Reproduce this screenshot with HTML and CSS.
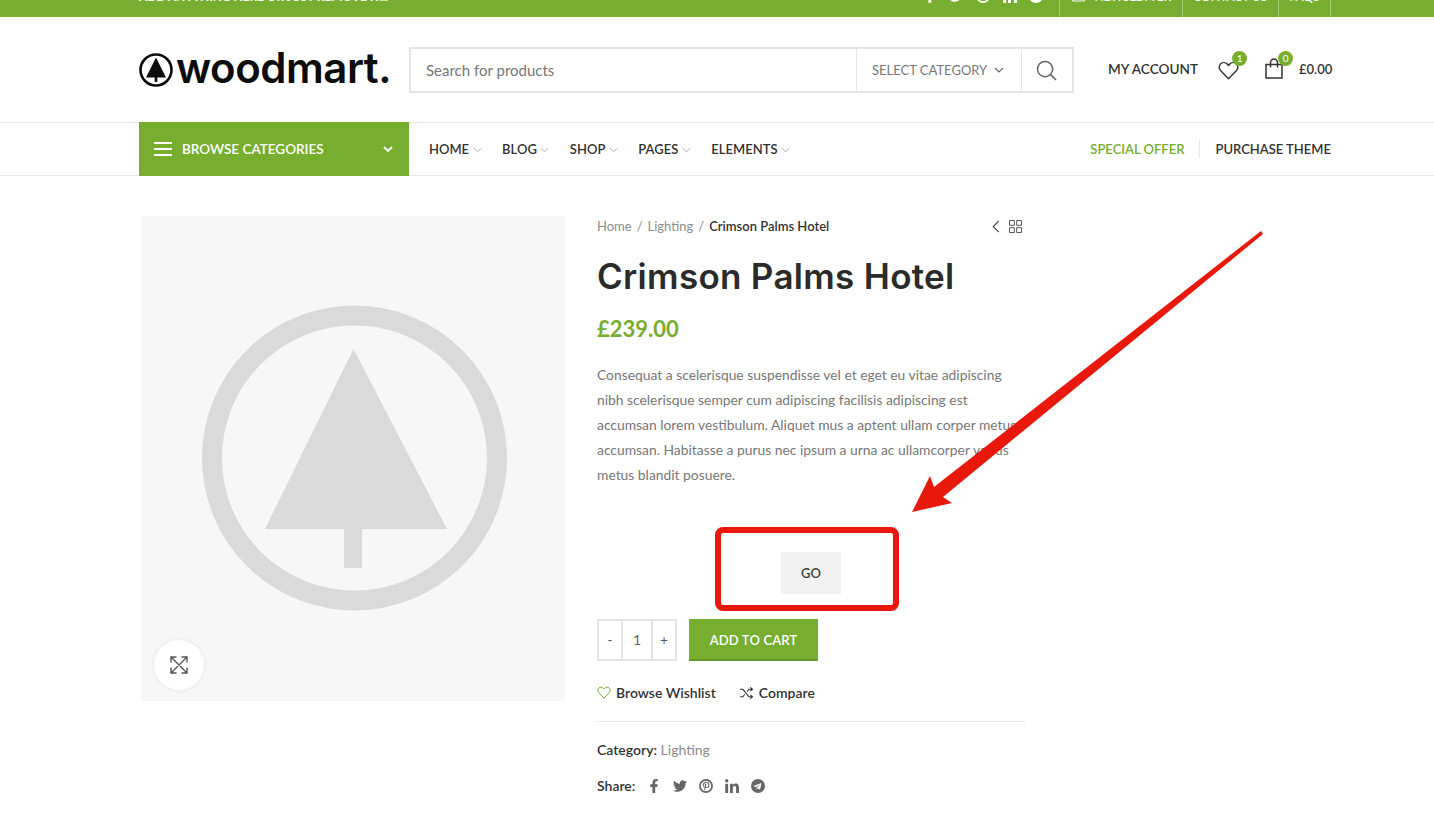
FILE: index.html
```html
<!DOCTYPE html>
<html lang="en">
<head>
    <meta charset="UTF-8">
    <meta name="viewport" content="width=device-width, initial-scale=1.0">
    <title>Crimson Palms Hotel - Woodmart</title>
    <link rel="stylesheet" href="styles.css">
</head>
<body>
    <!-- Shared icons -->
    <svg class="icon-defs" aria-hidden="true">
        <symbol id="i-facebook" viewBox="0 0 320 512"><path d="M279.14 288l14.22-92.66h-88.91v-60.13c0-25.35 12.42-50.06 52.24-50.06h40.42V6.26S260.43 0 225.36 0c-73.22 0-121.08 44.38-121.08 124.72v70.62H22.89V288h81.39v224h100.17V288z"/></symbol>
        <symbol id="i-twitter" viewBox="0 0 512 512"><path d="M459.37 151.716c.325 4.548.325 9.097.325 13.645 0 138.72-105.583 298.558-298.558 298.558-59.452 0-114.68-17.219-161.137-47.106 8.447.974 16.568 1.299 25.34 1.299 49.055 0 94.213-16.568 130.274-44.832-46.132-.975-84.792-31.188-98.112-72.772 6.498.974 12.995 1.624 19.818 1.624 9.421 0 18.843-1.3 27.614-3.573-48.081-9.747-84.143-51.98-84.143-102.985v-1.299c13.969 7.797 30.214 12.67 47.431 13.319-28.264-18.843-46.781-51.005-46.781-87.391 0-19.492 5.197-37.36 14.294-52.954 51.655 63.675 129.3 105.258 216.365 109.807-1.624-7.797-2.599-15.918-2.599-24.04 0-57.828 46.782-104.934 104.934-104.934 30.213 0 57.502 12.67 76.67 33.137 23.715-4.548 46.456-13.32 66.599-25.34-7.798 24.366-24.366 44.833-46.132 57.827 21.117-2.273 41.584-8.122 60.426-16.243-14.292 20.791-32.161 39.308-52.628 54.253z"/></symbol>
        <symbol id="i-pinterest" viewBox="0 0 24 24"><circle cx="12" cy="12" r="10.4" fill="none" stroke="currentColor" stroke-width="3"/><g transform="translate(6.500 4.600) scale(.03)"><path d="M204 6.500C101.400 6.500 0 74.900 0 185.600 0 256 39.600 296 63.600 296c9.900 0 15.600-27.600 15.600-35.400 0-9.300-23.700-29.100-23.700-67.800 0-80.400 61.200-137.400 140.400-137.400 68.100 0 118.500 38.700 118.500 109.800 0 53.100-21.300 152.700-90.300 152.700-24.900 0-46.200-18-46.200-43.800 0-37.800 26.400-74.400 26.400-113.400 0-66.200-93.900-54.200-93.900 25.800 0 16.800 2.100 35.400 9.600 50.700-13.800 59.400-42 147.900-42 209.100 0 18.900 2.700 37.500 4.500 56.400 3.400 3.800 1.700 3.400 6.900 1.500 50.400-69 48.600-82.500 71.400-172.800 12.300 23.400 44.100 36 69.300 36 106.200 0 153.900-103.500 153.900-196.800C384 71.300 298.200 6.500 204 6.500z"/></g></symbol>
        <symbol id="i-linkedin" viewBox="0 0 448 448"><path d="M100.28 448H7.4V148.9h92.88zM53.79 108.1C24.09 108.1 0 83.5 0 53.8a53.79 53.79 0 0 1 107.58 0c0 29.7-24.1 54.3-53.79 54.3zM447.9 448h-92.68V302.4c0-34.7-.7-79.2-48.29-79.2-48.29 0-55.69 37.7-55.69 76.7V448h-92.78V148.9h89.08v40.8h1.3c12.4-23.5 42.69-48.3 87.88-48.3 94 0 111.28 61.9 111.28 142.3V448z"/></symbol>
        <symbol id="i-telegram" viewBox="0 0 24 24"><path fill-rule="evenodd" d="M12 0a12 12 0 1 0 0 24 12 12 0 0 0 0-24zM5.2 11.7l11.6-4.5c.6-.2 1.1.1.9 1l-2 9.3c-.1.7-.5.8-1.1.5l-3-2.2-1.5 1.4c-.2.2-.3.3-.6.3l.2-3.1 5.6-5c.2-.2 0-.3-.3-.1l-6.9 4.3-3-.9c-.6-.2-.6-.6.1-.9z"/></symbol>
        <symbol id="i-chevron" viewBox="0 0 10 6"><path d="M1 1l4 4 4-4" fill="none" stroke="currentColor" stroke-width="1.1"/></symbol>
        <symbol id="i-heart" viewBox="0 0 24 22"><path d="M12 20.500L3 11.400C.6 9 .7 5.300 3 3.200c2.300-2 5.800-1.700 7.800.6L12 5.200l1.200-1.400c2-2.300 5.500-2.600 7.800-.6 2.300 2.100 2.400 5.800 0 8.200z" fill="none" stroke="currentColor" stroke-width="1.700" stroke-linejoin="round"/></symbol>
    </svg>

    <div class="topbar">
        <div class="wrap topbar-inner">
            <span class="topbar-text">ADD ANYTHING HERE OR JUST REMOVE IT...</span>
            <div class="topbar-right">
                <div class="topbar-social">
                    <svg class="soc soc-f"><use href="#i-facebook"/></svg>
                    <svg class="soc"><use href="#i-twitter"/></svg>
                    <svg class="soc"><use href="#i-pinterest"/></svg>
                    <svg class="soc"><use href="#i-linkedin"/></svg>
                    <svg class="soc"><use href="#i-telegram"/></svg>
                </div>
                <a class="topbar-link newsletter">
                    <svg class="mail" viewBox="0 0 14 12"><path d="M.6.6h12.800v10.800H.6zM.6 1l6.400 5 6.400-5" fill="none" stroke="#fff"/></svg>
                    NEWSLETTER
                </a>
                <a class="topbar-link">CONTACT US</a>
                <a class="topbar-link">FAQS</a>
            </div>
        </div>
    </div>

    <!-- Logo, search, account -->
    <header class="header-main">
        <div class="wrap header-inner">
            <a class="logo">
                <svg class="logo-mark" viewBox="0 0 34 34">
                    <circle cx="17" cy="17" r="15.500" fill="none" stroke="#0c0c0c" stroke-width="2.600"/>
                    <path d="M17 4.500L7 24.500h8.700v4.500h2.600v-4.500H27z" fill="#0c0c0c"/>
                </svg>
                <span class="logo-text">woodmart.</span>
            </a>
            <form class="search">
                <span class="search-input">Search for products</span>
                <span class="search-cat">SELECT CATEGORY <svg class="chev-cat"><use href="#i-chevron"/></svg></span>
                <span class="search-btn">
                    <svg viewBox="0 0 22 22" width="21" height="21"><circle cx="9.500" cy="9.500" r="8" fill="none" stroke="#666" stroke-width="1.600"/><path d="M15.300 15.300l5.700 5.700" stroke="#666" stroke-width="1.700"/></svg>
                </span>
            </form>
            <div class="header-tools">
                <a class="account">MY ACCOUNT</a>
                <a class="tool-wish">
                    <svg class="wish-icon"><use href="#i-heart"/></svg>
                    <span class="badge">1</span>
                </a>
                <a class="tool-cart">
                    <svg class="cart-icon" viewBox="0 0 18 21"><path d="M1 6.500h16V20H1zM5.500 9.500V4.500a3.500 3.500 0 0 1 7 0v5" fill="none" stroke="#333" stroke-width="1.500"/></svg>
                    <span class="badge">0</span>
                    <span class="cart-total">£0.00</span>
                </a>
            </div>
        </div>
    </header>

    <!-- Navigation -->
    <nav class="navbar">
        <div class="wrap nav-inner">
            <div class="browse">
                <span class="burger"><i></i><i></i><i></i></span>
                <span class="browse-text">BROWSE CATEGORIES</span>
                <svg class="browse-chev" viewBox="0 0 10 6"><path d="M1 1l4 4 4-4" fill="none" stroke="#fff" stroke-width="1.800"/></svg>
            </div>
            <ul class="menu">
                <li>HOME<svg><use href="#i-chevron"/></svg></li>
                <li>BLOG<svg><use href="#i-chevron"/></svg></li>
                <li>SHOP<svg><use href="#i-chevron"/></svg></li>
                <li>PAGES<svg><use href="#i-chevron"/></svg></li>
                <li>ELEMENTS<svg><use href="#i-chevron"/></svg></li>
            </ul>
            <div class="menu-right">
                <a class="offer">SPECIAL OFFER</a>
                <a class="purchase">PURCHASE THEME</a>
            </div>
        </div>
    </nav>

    <!-- Product -->
    <main class="wrap product">
        <div class="gallery">
            <svg class="placeholder" viewBox="0 0 424 484">
                <circle cx="213.500" cy="242" r="142.500" fill="none" stroke="#dadada" stroke-width="20"/>
                <path d="M212.500 133L124 313h79v39h18v-39h85z" fill="#dadada"/>
            </svg>
            <button class="zoom-btn" type="button">
                <svg viewBox="0 0 18 18" width="18" height="18"><path d="M1.500 1.500l15 15M16.500 1.500l-15 15M1 6.500V1h5.500M11.500 1H17v5.500M1 11.500V17h5.500M11.500 17H17v-5.500" fill="none" stroke="#555" stroke-width="1.400"/></svg>
            </button>
        </div>

        <section class="summary">
            <div class="crumbs">
                <span class="crumb">Home</span><span class="sep">/</span>
                <span class="crumb">Lighting</span><span class="sep">/</span>
                <span class="crumb-current">Crimson Palms Hotel</span>
                <span class="crumb-tools">
                    <svg viewBox="0 0 8 14" width="8" height="13"><path d="M7 1L1 7l6 6" fill="none" stroke="#444" stroke-width="1.200"/></svg>
                    <svg viewBox="0 0 13 13" width="13" height="13"><path d="M.5.500h4.800v4.800H.5zM7.700.500h4.800v4.800H7.700zM.5 7.700h4.800v4.800H.5zM7.700 7.700h4.800v4.800H7.700z" fill="none" stroke="#555"/></svg>
                </span>
            </div>
            <h1 class="title">Crimson Palms Hotel</h1>
            <p class="price">£239.00</p>
            <p class="desc">Consequat a scelerisque suspendisse vel et eget eu vitae adipiscing nibh scelerisque semper cum adipiscing facilisis adipiscing est accumsan lorem vestibulum. Aliquet mus a aptent ullam corper metus accumsan. Habitasse a purus nec ipsum a urna ac ullamcorper varius metus blandit posuere.</p>

            <div class="go-row">
                <button class="go-btn" type="button">GO</button>
                <span class="red-frame"></span>
            </div>

            <div class="cart-row">
                <div class="qty">
                    <span class="qty-btn">-</span>
                    <span class="qty-val">1</span>
                    <span class="qty-btn">+</span>
                </div>
                <button class="add-btn" type="button">ADD TO CART</button>
            </div>

            <div class="actions">
                <a class="wish-link">
                    <svg class="wish-green"><use href="#i-heart"/></svg>
                    Browse Wishlist
                </a>
                <a class="compare-link">
                    <svg viewBox="0 0 15 13" width="14" height="12"><path d="M0 2.500h3l6.500 8H13M0 10.500h3l2-2.500M7.500 5l2-2.500H13M11 .5l2.500 2-2.500 2M11 8.500l2.500 2-2.500 2" fill="none" stroke="#333" stroke-width="1.100"/></svg>
                    Compare
                </a>
            </div>

            <div class="meta">
                <p class="cat"><b>Category:</b> <span>Lighting</span></p>
                <div class="share">
                    <b>Share:</b>
                    <svg class="sh sh-f"><use href="#i-facebook"/></svg>
                    <svg class="sh"><use href="#i-twitter"/></svg>
                    <svg class="sh"><use href="#i-pinterest"/></svg>
                    <svg class="sh"><use href="#i-linkedin"/></svg>
                    <svg class="sh"><use href="#i-telegram"/></svg>
                </div>
            </div>
        </section>
    </main>

    <!-- Red annotation arrow drawn over the page -->
    <svg class="red-arrow" viewBox="0 0 360 290" width="360" height="290">
        <path d="M2 282L20 246L24 257L351 1L353 4L33 267L42 273z" fill="#e8190c"/>
    </svg>
</body>
</html>
```

FILE: styles.css
```css
/* General */
body {
    margin: 0;
    font-family: Lato, sans-serif;
    font-size: 14px;
    color: #333;
    background: #fff;
    position: relative;
    overflow-x: hidden;
}

a {
    color: inherit;
    text-decoration: none;
}

.icon-defs {
    display: none;
}

/* The shot is wider than the window, so the content starts at 139px */
.wrap {
    width: 1192px;
    margin-left: 139px;
}

/* Top bar */
.topbar {
    height: 42px;
    margin-top: -25px;
    background-color: #77ae2f;
    color: #fff;
}

.topbar-inner {
    display: flex;
    justify-content: space-between;
    align-items: stretch;
    height: 100%;
}

.topbar-text {
    align-self: center;
    font-size: 11.900px;
    font-weight: 700;
}

.topbar-right {
    display: flex;
    align-items: stretch;
}

.topbar-social {
    display: flex;
    align-items: center;
    gap: 12.500px;
    padding-right: 16px;
}

.soc {
    width: 14px;
    height: 14px;
    fill: #fff;
    color: #fff;
}

.topbar-link {
    display: flex;
    align-items: center;
    gap: 9px;
    padding: 0 10.500px;
    font-size: 12px;
    font-weight: 500;
    border-left: 1px solid rgba(255, 255, 255, .35);
}

.topbar-link:last-child {
    border-right: 1px solid rgba(255, 255, 255, .35);
}

.newsletter {
    padding-left: 12px;
}

.mail {
    width: 13px;
    height: 12px;
}

/* Header */
.header-main {
    height: 105px;
    border-bottom: 1px solid #e6e6e6;
}

.header-inner {
    display: flex;
    align-items: center;
    height: 100%;
}

.logo {
    display: flex;
    flex-shrink: 0;
    align-items: center;
    width: 270px;
    gap: 3px;
}

.logo-mark {
    width: 34px;
    height: 34px;
}

.logo-text {
    margin-top: -3px;
    font-family: Inter, sans-serif;
    font-size: 42px;
    font-weight: 600;
    line-height: 1;
    letter-spacing: -.5px;
    color: #0c0c0c;
}

.search {
    display: flex;
    flex-shrink: 0;
    align-items: stretch;
    width: 665px;
    height: 46px;
    box-sizing: border-box;
    border: 2px solid #e4e4e4;
    margin-top: 1px;
}

.search-input {
    flex: 1;
    padding-left: 15px;
    font-size: 15px;
    line-height: 42px;
    color: #777;
}

.search-cat {
    display: flex;
    align-items: center;
    gap: 7px;
    width: 166px;
    box-sizing: border-box;
    padding-left: 15px;
    font-size: 13px;
    color: #777;
    border-left: 1px solid #e4e4e4;
    border-right: 1px solid #e4e4e4;
}

.chev-cat {
    width: 10px;
    height: 6px;
    color: #666;
}

.search-btn {
    display: flex;
    align-items: center;
    justify-content: center;
    width: 50px;
    padding-right: 2px;
    box-sizing: border-box;
}

.header-tools {
    display: flex;
    flex-shrink: 0;
    align-items: center;
    margin: 0 0 2px 34px;
}

.account {
    font-size: 13.600px;
    font-weight: 600;
    white-space: nowrap;
    color: #333;
}

.tool-wish,
.tool-cart {
    position: relative;
    display: flex;
    align-items: center;
}

.tool-wish {
    margin-left: 20px;
}

.wish-icon {
    width: 21px;
    height: 19px;
    color: #333;
    margin-top: 3px;
}

.tool-cart {
    margin-left: 26px;
}

.cart-icon {
    width: 18px;
    height: 21px;
}

.badge {
    position: absolute;
    width: 15px;
    height: 15px;
    border-radius: 50%;
    font-size: 10px;
    line-height: 15px;
    text-align: center;
    color: #fff;
    background-color: #77ae2f;
}

.tool-wish .badge {
    top: -7px;
    right: -8px;
}

.tool-cart .badge {
    left: 13px;
    top: -7px;
}

.cart-total {
    margin-left: 16px;
    font-size: 13px;
    font-weight: 600;
}

/* Navigation */
.navbar {
    height: 52px;
    border-bottom: 1px solid #e6e6e6;
}

.nav-inner {
    display: flex;
    align-items: center;
    height: 100%;
}

.browse {
    display: flex;
    align-items: center;
    align-self: flex-start;
    width: 270px;
    height: 54px;
    margin-top: -1px;
    box-sizing: border-box;
    padding: 0 16px 0 15px;
    color: #fff;
    background-color: #77ae2f;
}

.burger {
    display: flex;
    flex-direction: column;
    gap: 4px;
    width: 18px;
}

.burger i {
    display: block;
    height: 2px;
    background: #fff;
}

.browse-text {
    flex: 1;
    margin-left: 10px;
    font-size: 13.500px;
    font-weight: 600;
}

.browse-chev {
    width: 10px;
    height: 6px;
}

.menu {
    display: flex;
    list-style: none;
    gap: 20.500px;
    margin: 0;
    padding: 0 0 0 20px;
    font-size: 13px;
    font-weight: 600;
    color: #333;
}

.menu li {
    display: flex;
    align-items: center;
    gap: 3.500px;
}

.menu svg {
    width: 9px;
    height: 6px;
    margin-top: 2px;
    color: #aaa;
}

.menu-right {
    display: flex;
    align-items: center;
    margin-left: auto;
    font-size: 13px;
    font-weight: 600;
}

.offer {
    padding-right: 15px;
    color: #77ae2f;
    border-right: 1px solid #e6e6e6;
    line-height: 18px;
}

.purchase {
    padding-left: 15px;
    color: #333;
}

/* Product */
.product {
    display: flex;
    gap: 32px;
    padding-top: 40px;
}

.gallery {
    position: relative;
    width: 424px;
    height: 485px;
    margin-left: 2px;
    background-color: #f7f7f7;
}

.placeholder {
    display: block;
    width: 424px;
    height: 484px;
}

.zoom-btn {
    position: absolute;
    left: 13px;
    bottom: 11px;
    display: flex;
    align-items: center;
    justify-content: center;
    width: 50px;
    height: 50px;
    padding: 0;
    border: none;
    border-radius: 50%;
    background: #fff;
    box-shadow: 0 0 4px rgba(0, 0, 0, .08);
}

.summary {
    width: 428px;
}

.crumbs {
    display: flex;
    align-items: center;
    height: 20px;
    padding-right: 3px;
    font-size: 13px;
    color: #8c8c8c;
}

.sep {
    margin: 0 5px;
}

.crumb-current {
    font-weight: 600;
    color: #333;
}

.crumb-tools {
    display: flex;
    align-items: center;
    gap: 9px;
    margin-left: auto;
}

.title {
    margin: 16px 0 0;
    font-family: Inter, sans-serif;
    font-size: 35px;
    font-weight: 600;
    line-height: 48px;
    letter-spacing: .3px;
    color: #2b2b2b;
}

.price {
    margin: 14px 0 0;
    font-size: 22px;
    font-weight: 700;
    line-height: 30px;
    color: #77ae2f;
}

.desc {
    margin: 18px 0 0;
    font-size: 13.850px;
    line-height: 25px;
    color: #777;
}

.go-row {
    position: relative;
    display: flex;
    justify-content: center;
    margin-top: 65px;
}

.go-btn {
    width: 60px;
    height: 42px;
    padding: 0;
    border: none;
    font-family: Lato, sans-serif;
    font-size: 13px;
    font-weight: 600;
    color: #3e3e3e;
    background-color: #f1f1f1;
}

.red-frame {
    position: absolute;
    left: 118px;
    top: -25px;
    width: 184px;
    height: 84px;
    box-sizing: border-box;
    border: 6px solid #e8190c;
    border-radius: 8px;
}

.cart-row {
    display: flex;
    gap: 12px;
    margin-top: 25px;
}

.qty {
    display: flex;
    width: 80px;
    height: 42px;
    box-sizing: border-box;
    border: 2px solid #e4e4e4;
}

.qty-btn {
    width: 22px;
    font-size: 13px;
    line-height: 38px;
    text-align: center;
    color: #555;
}

.qty-val {
    flex: 1;
    font-size: 14px;
    line-height: 38px;
    text-align: center;
    color: #666;
    border-left: 2px solid #e4e4e4;
    border-right: 2px solid #e4e4e4;
}

.add-btn {
    width: 129px;
    height: 42px;
    padding: 2px 0 0;
    border: none;
    border-bottom: 2px solid #659727;
    font-family: Lato, sans-serif;
    font-size: 13px;
    font-weight: 600;
    letter-spacing: .15px;
    color: #fff;
    background-color: #77ae2f;
}

.actions {
    display: flex;
    align-items: center;
    gap: 24px;
    margin-top: 21px;
    height: 21px;
    font-size: 14px;
    font-weight: 600;
    color: #333;
}

.wish-link,
.compare-link {
    display: flex;
    align-items: center;
    gap: 5px;
}

.wish-green {
    width: 14px;
    height: 13px;
    color: #77ae2f;
}

.meta {
    margin-top: 18px;
    padding-top: 17px;
    border-top: 1px solid #e6e6e6;
}

.cat {
    margin: 0;
    line-height: 21px;
    color: #8c8c8c;
}

.cat b,
.share b {
    font-weight: 600;
    color: #333;
}

.share {
    display: flex;
    align-items: center;
    gap: 12px;
    height: 21px;
    margin-top: 15px;
}

.sh {
    width: 14px;
    height: 14px;
    fill: #666;
    color: #666;
}

/* Annotation over the page */
.red-arrow {
    position: absolute;
    left: 910px;
    top: 230px;
}
```
